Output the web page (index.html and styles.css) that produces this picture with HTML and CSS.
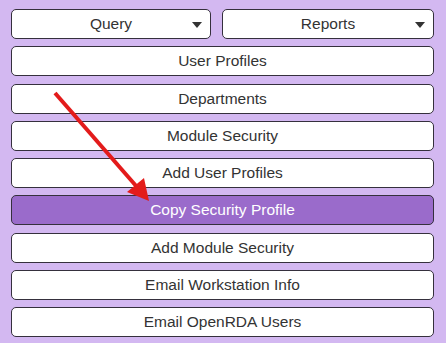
FILE: index.html
```html
<!DOCTYPE html>
<html lang="en">
<head>
    <meta charset="UTF-8">
    <title>Security Menu</title>
    <link rel="stylesheet" href="styles.css">
</head>
<body>
    <div class="menu">
        <div class="menu-top">
            <button class="drop-btn query">Query<span class="caret"></span></button>
            <button class="drop-btn">Reports<span class="caret"></span></button>
        </div>
        <button class="menu-btn">User Profiles</button>
        <button class="menu-btn">Departments</button>
        <button class="menu-btn">Module Security</button>
        <button class="menu-btn">Add User Profiles</button>
        <button class="menu-btn active">Copy Security Profile</button>
        <button class="menu-btn">Add Module Security</button>
        <button class="menu-btn">Email Workstation Info</button>
        <button class="menu-btn">Email OpenRDA Users</button>

        <!-- Pointer arrow -->
        <svg class="pointer" width="446" height="343" viewBox="0 0 446 343">
            <line x1="55" y1="93" x2="137" y2="187" stroke="#e31b1b" stroke-width="4"/>
            <polygon points="149,201 127,192 144,178" fill="#e31b1b"/>
        </svg>
    </div>
</body>
</html>
```

FILE: styles.css
```css
* {
    margin: 0;
    padding: 0;
    box-sizing: border-box;
}

body {
    background: #d3b8f1;
    font-family: 'Liberation Sans', Arial, sans-serif;
    width: 446px;
    height: 343px;
    overflow: hidden;
}

.menu {
    position: relative;
    display: flex;
    flex-direction: column;
    gap: 7.25px;
    padding: 9px 12px 0 11px;
    height: 100%;
}

.menu-top {
    display: flex;
    gap: 11px;
}

.drop-btn,
.menu-btn {
    flex: 0 0 30px;
    height: 30px;
    background: #ffffff;
    border: 1.5px solid #35303d;
    border-radius: 5px;
    color: #333333;
    font-family: inherit;
    font-size: 15.5px;
    text-align: center;
}

.drop-btn {
    flex: 1 1 0;
    position: relative;
}

.drop-btn.query {
    flex: 0 0 200px;
}

.caret {
    position: absolute;
    right: 8px;
    top: 12px;
    width: 0;
    height: 0;
    border-left: 5px solid transparent;
    border-right: 5px solid transparent;
    border-top: 6px solid #333333;
}

.menu-btn.active {
    background: #9a6bcb;
    color: #ffffff;
}

.pointer {
    position: absolute;
    top: 0;
    left: 0;
    pointer-events: none;
}
```
